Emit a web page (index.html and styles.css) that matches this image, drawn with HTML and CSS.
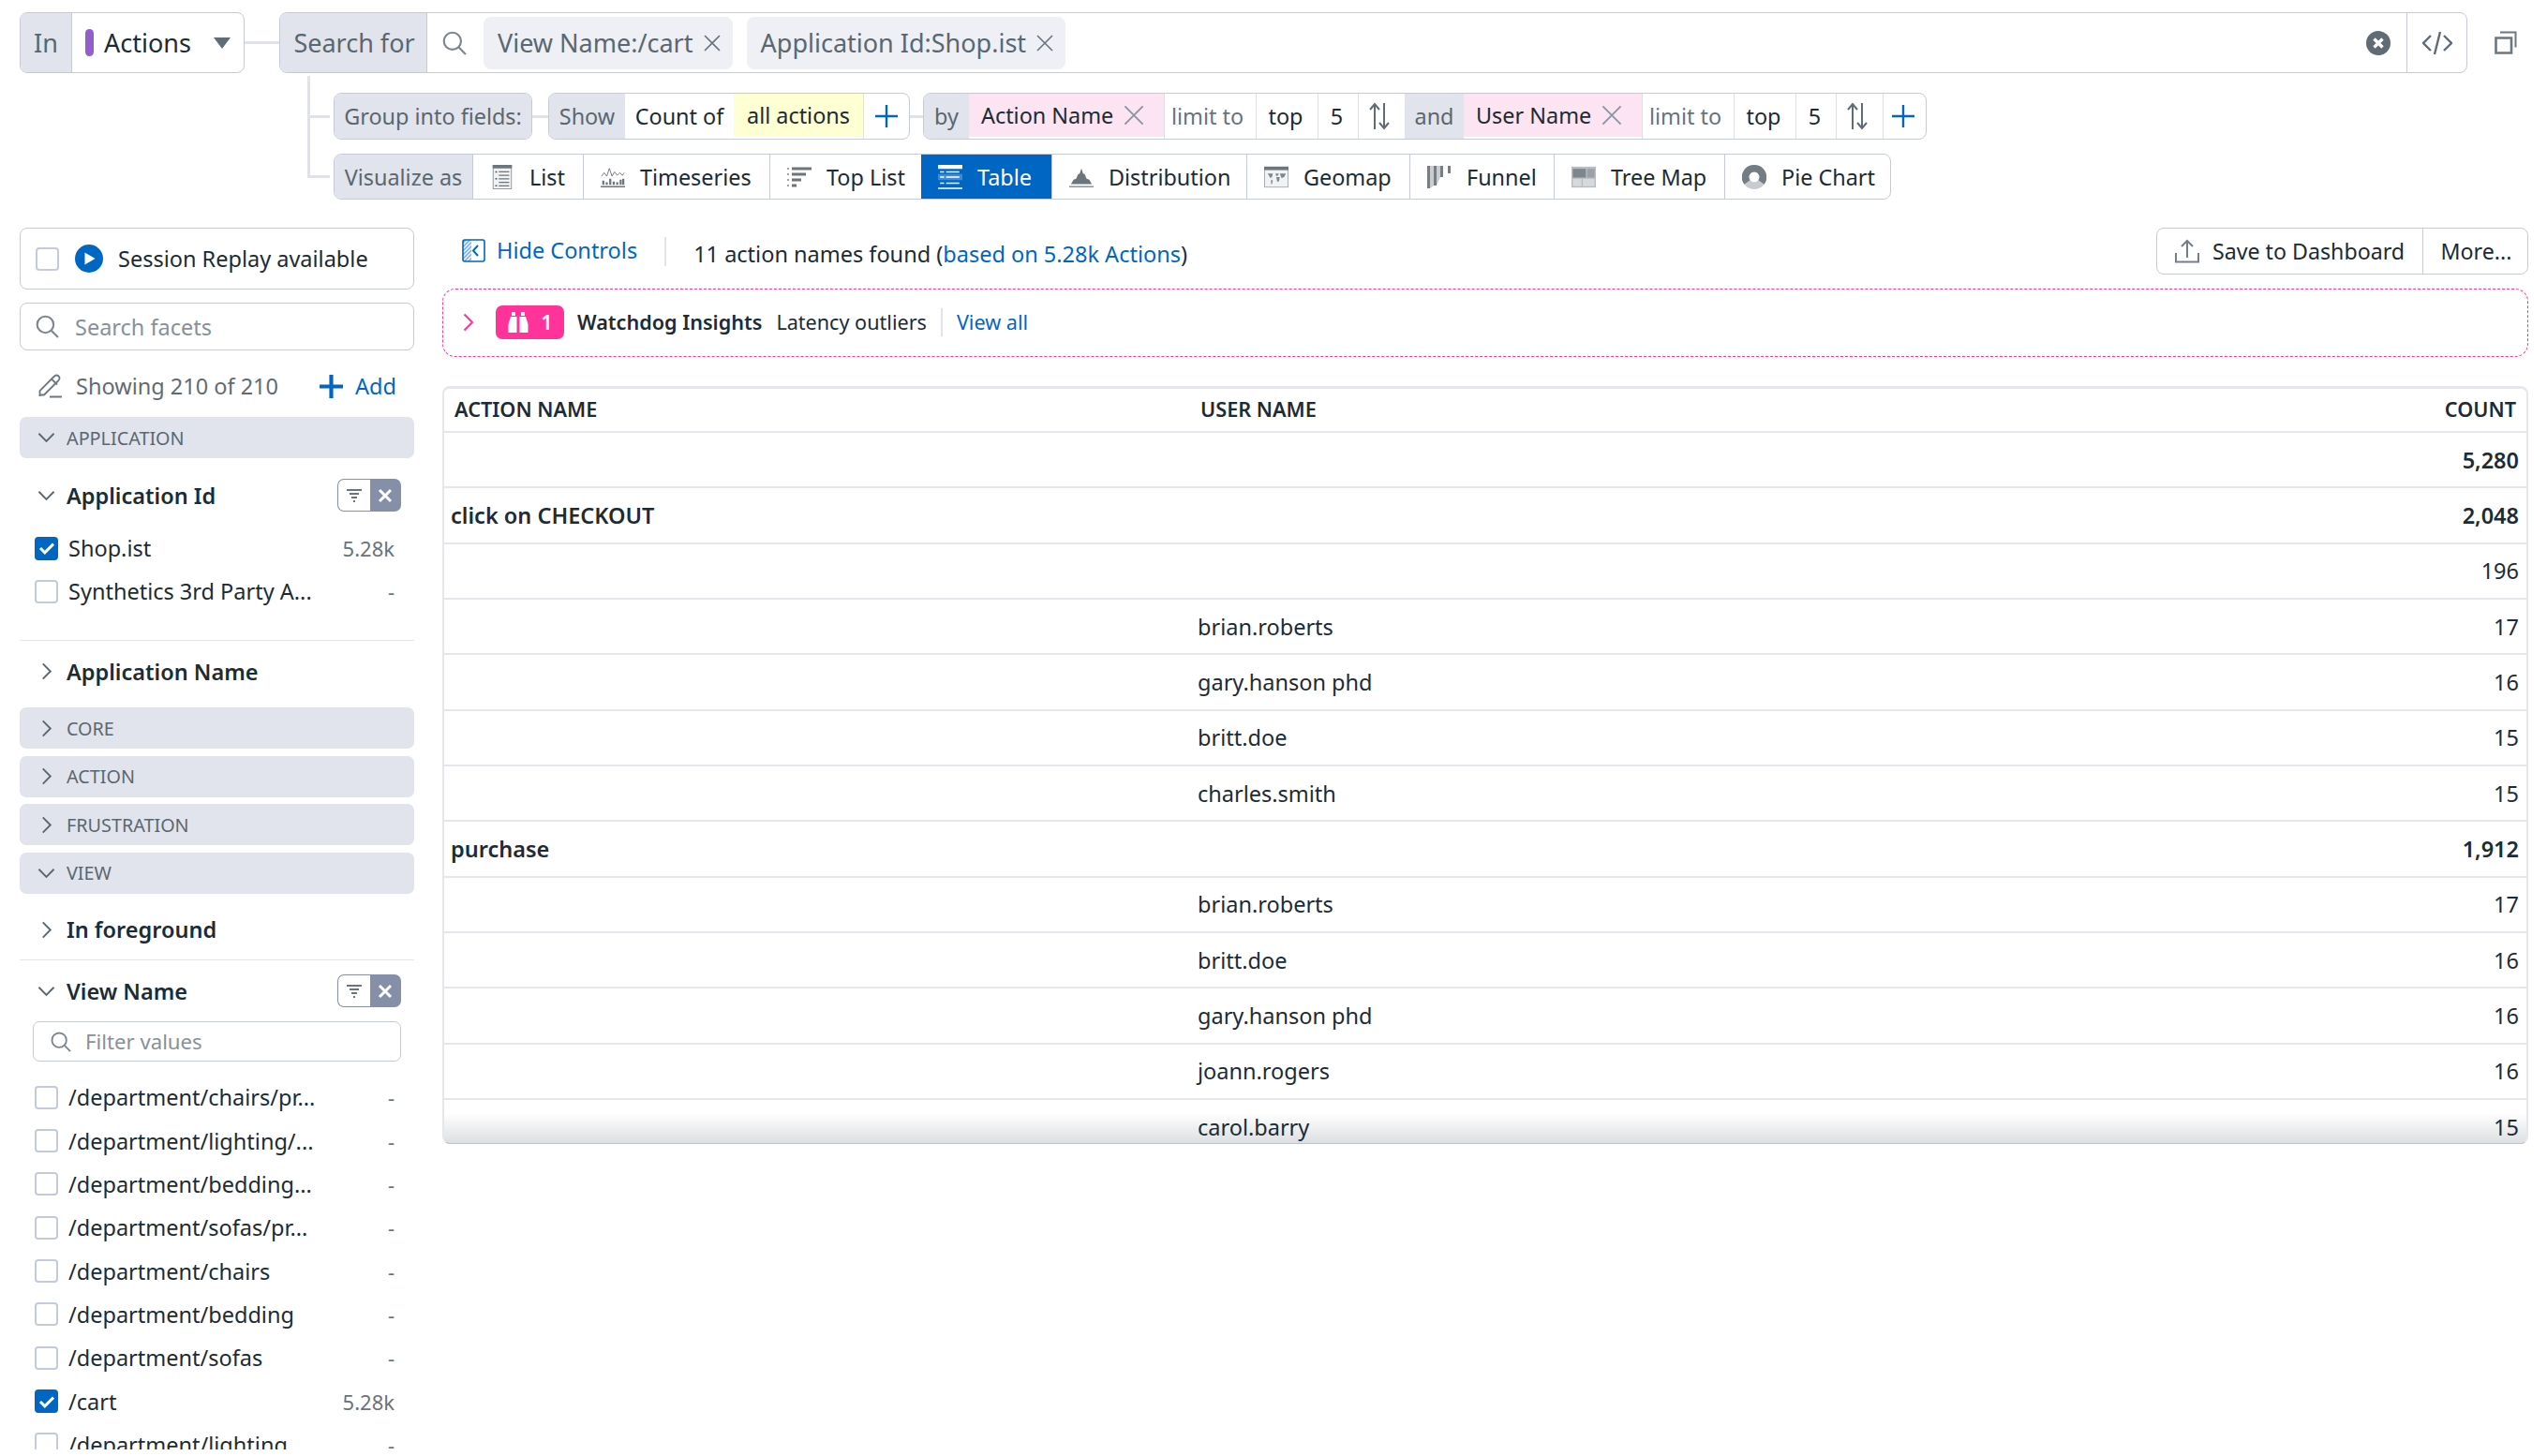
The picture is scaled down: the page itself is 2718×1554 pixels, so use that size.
FILE: index.html
```html
<!DOCTYPE html>
<html>
<head>
<meta charset="utf-8">
<title>Actions</title>
<link rel="stylesheet" href="styles.css">
</head>
<body>

<svg class="sprite" xmlns="http://www.w3.org/2000/svg">
  <symbol id="i-search" viewBox="0 0 24 24"><circle cx="10" cy="10" r="8.4" fill="none" stroke="currentColor" stroke-width="2"/><path d="M16 16l7 7" fill="none" stroke="currentColor" stroke-width="2"/></symbol>
  <symbol id="i-x" viewBox="0 0 20 20"><path d="M2 2l16 16M18 2L2 18" fill="none" stroke="currentColor" stroke-width="1.6"/></symbol>
  <symbol id="i-plus" viewBox="0 0 24 24"><path d="M12 0v24M0 12h24" fill="none" stroke="currentColor" stroke-width="2.4"/></symbol>
  <symbol id="i-plus-bold" viewBox="0 0 24 24"><path d="M12 0v24M0 12h24" fill="none" stroke="currentColor" stroke-width="4"/></symbol>
  <symbol id="i-sort" viewBox="0 0 24 30"><path d="M7 29V3M2 8l5-6 5 6M17 1v26M12 22l5 6 5-6" fill="none" stroke="currentColor" stroke-width="2"/></symbol>
  <symbol id="i-down" viewBox="0 0 20 12"><path d="M1.5 1.5L10 10l8.5-8.5" fill="none" stroke="currentColor" stroke-width="2"/></symbol>
  <symbol id="i-right" viewBox="0 0 12 20"><path d="M1.5 1.5L10 10l-8.5 8.5" fill="none" stroke="currentColor" stroke-width="2"/></symbol>
  <symbol id="i-funnel" viewBox="0 0 16 14"><path d="M0 1h16M3 5h10M5 9h6M7 13h2" fill="none" stroke="currentColor" stroke-width="1.6"/></symbol>
  <symbol id="i-close" viewBox="0 0 16 16"><path d="M2 2l12 12M14 2L2 14" fill="none" stroke="currentColor" stroke-width="3"/></symbol>
  <symbol id="i-check" viewBox="0 0 20 16"><path d="M2 8l5.500 5.500L18 3" fill="none" stroke="currentColor" stroke-width="3.4"/></symbol>
</svg>

<div class="page">

  <!-- query builder -->
  <div class="query-row">
    <div class="seg-group source">
      <div class="seg seg-label">In</div>
      <div class="seg source-pick">
        <span class="source-dot"></span>
        <span class="source-name">Actions</span>
        <span class="source-caret"></span>
      </div>
    </div>
    <span class="link link-wide"></span>
    <div class="seg-group search-bar">
      <div class="seg seg-label search-label">Search for</div>
      <svg class="icon search-icon"><use href="#i-search"/></svg>
      <span class="pill">View Name:/cart <svg class="icon pill-x"><use href="#i-x"/></svg></span>
      <span class="pill">Application Id:Shop.ist <svg class="icon pill-x"><use href="#i-x"/></svg></span>
      <svg class="clear-icon" viewBox="0 0 26 26"><circle cx="13" cy="13" r="13" fill="#5f6b75"/><path d="M8.5 8.5l9 9M17.5 8.5l-9 9" stroke="#fff" stroke-width="3.4"/></svg>
      <div class="code-btn">
        <svg class="code-icon" viewBox="0 0 32 26"><path d="M9 5l-8 8 8 8M23 5l8 8-8 8M19 1l-6 24" fill="none" stroke="#5f6b75" stroke-width="2.4"/></svg>
      </div>
    </div>
    <svg class="copy-icon" viewBox="0 0 24 25"><path d="M1.5 7.5h16.500v16H1.5z" fill="none" stroke="#6c7780" stroke-width="2.6"/><path d="M6 1.5h16.500v16" fill="none" stroke="#6c7780" stroke-width="2"/></svg>
  </div>

  <div class="tree">
    <div class="tree-row">
      <span class="stub"></span>
      <div class="seg-group group-label"><div class="seg seg-label">Group into fields:</div></div>
      <span class="link"></span>
      <div class="seg-group show-grid">
        <div class="seg seg-label">Show</div>
        <div class="seg">Count of</div>
        <div class="seg seg-yellow">all actions</div>
        <div class="seg seg-line"><svg class="icon plus-icon"><use href="#i-plus"/></svg></div>
      </div>
      <span class="link link-short"></span>
      <div class="seg-group by-grid">
        <div class="seg seg-label">by</div>
        <div class="seg seg-pink">Action Name <svg class="icon pink-x"><use href="#i-x"/></svg></div>
        <div class="seg seg-line seg-muted">limit to</div>
        <div class="seg seg-line">top</div>
        <div class="seg seg-line">5</div>
        <div class="seg seg-line seg-sort"><svg class="icon sort-icon"><use href="#i-sort"/></svg></div>
        <div class="seg seg-label">and</div>
        <div class="seg seg-pink">User Name <svg class="icon pink-x"><use href="#i-x"/></svg></div>
        <div class="seg seg-line seg-muted">limit to</div>
        <div class="seg seg-line">top</div>
        <div class="seg seg-line">5</div>
        <div class="seg seg-line seg-sort"><svg class="icon sort-icon"><use href="#i-sort"/></svg></div>
        <div class="seg seg-line"><svg class="icon plus-icon"><use href="#i-plus"/></svg></div>
      </div>
    </div>

    <div class="tree-row">
      <span class="stub"></span>
      <div class="seg-group viz-grid">
        <div class="seg seg-label">Visualize as</div>
        <div class="seg seg-viz">
          <svg class="viz-icon" viewBox="0 0 22 28"><rect x=".5" y=".5" width="21" height="27" fill="#f1f2f3" stroke="#8b9298"/><rect width="22" height="4" fill="#6c757c"/><path d="M7 8h12M7 12h12M7 16h12M7 20h12M7 24h12" stroke="#6c757c" stroke-width="1.4"/><path d="M3 8h2M3 16h2M3 24h2" stroke="#4d565d" stroke-width="1.6"/></svg>
          List
        </div>
        <div class="seg seg-viz">
          <svg class="viz-icon" viewBox="0 0 28 24"><path d="M1 11l3-4 3 4 3-9 3 9 3-5 3 4 3-3 3 3 2-3" fill="none" stroke="#6c757c" stroke-width="1"/><path d="M3 21v-5M7 21v-3M11 21v-7M15 21v-4M19 21v-3M23 21v-6M26 21v-7" stroke="#6c757c" stroke-width="2.4"/><path d="M0 23h28" stroke="#6c757c" stroke-width="1.6"/></svg>
          Timeseries
        </div>
        <div class="seg seg-viz">
          <svg class="viz-icon" viewBox="0 0 26 22"><path d="M5 2h21M5 8h15M5 14h10M5 20h5" stroke="#6c757c" stroke-width="3"/><path d="M0 2h2M0 8h2M0 14h2M0 20h2" stroke="#9ea5aa" stroke-width="2"/></svg>
          Top List
        </div>
        <div class="seg seg-viz seg-active">
          <svg class="viz-icon" viewBox="0 0 24 24"><path d="M0 2h24" stroke="#fff" stroke-width="4"/><rect y="9" width="24" height="6" fill="#3f8ad2"/><path d="M2 7h4M8 7h13M2 12h4M8 12h13M2 18h4M8 18h13M0 23h24" stroke="#fff" stroke-width="1.4"/></svg>
          Table
        </div>
        <div class="seg seg-viz">
          <svg class="viz-icon" viewBox="0 0 28 24"><path d="M2 20h24l-3-5-3-1-2-5-2-1-2-6-2 6-2 1-2 5-3 1z" fill="#6c757c"/><path d="M0 23h28" stroke="#8b9298" stroke-width="1.8"/></svg>
          Distribution
        </div>
        <div class="seg seg-viz">
          <svg class="viz-icon" viewBox="0 0 28 24"><rect x=".5" y=".5" width="27" height="23" fill="#f1f2f3" stroke="#a5abaf"/><rect width="28" height="4" fill="#6c757c"/><path d="M4 8h6l-1 4-2 1-1-2zM8 15l2 1-1 4h-1zM13 8h4l-1 2-2 1zM14 12h4l-1 5h-2zM18 8h7l-2 4-3 1z" fill="#7d868c"/></svg>
          Geomap
        </div>
        <div class="seg seg-viz">
          <svg class="viz-icon" viewBox="0 0 26 26"><path d="M0 1h3v24H0zM7 1h3v21H7zM14 1h3v12h-3zM22 1h3v8h-3z" fill="#757e85"/><path d="M3 25l4-3V1H3zM10 22l4-9V1h-4z" fill="#c9cdd0"/></svg>
          Funnel
        </div>
        <div class="seg seg-viz">
          <svg class="viz-icon" viewBox="0 0 28 24"><rect width="28" height="24" fill="#b9bdc1"/><rect x="1.5" y="2.5" width="15" height="10" fill="#7d868c"/><rect x="18" y="2.5" width="8.5" height="10" fill="#9ba2a7"/><rect x="1.5" y="14" width="10" height="8.5" fill="#d7dadc"/><rect x="13" y="14" width="13.5" height="8.5" fill="#d7dadc"/></svg>
          Tree Map
        </div>
        <div class="seg seg-viz">
          <svg class="viz-icon" viewBox="0 0 24 24"><circle cx="12" cy="12" r="8.5" fill="none" stroke="#c8ccd0" stroke-width="7"/><path d="M12 3.500A8.500 8.500 0 0 1 19 17M5 17A8.500 8.500 0 0 1 12 3.500" fill="none" stroke="#747d84" stroke-width="7"/></svg>
          Pie Chart
        </div>
      </div>
    </div>
  </div>

  <div class="content">

    <!-- facets -->
    <div class="sidebar">
      <div class="replay-box">
        <span class="check"></span>
        <svg class="play-icon" viewBox="0 0 30 30"><circle cx="15" cy="15" r="15" fill="#0066c4"/><path d="M10.5 8.5v13l11-6.500z" fill="#fff"/></svg>
        <span>Session Replay available</span>
      </div>
      <div class="facet-search">
        <svg class="icon facet-search-icon"><use href="#i-search"/></svg>
        <span>Search facets</span>
      </div>
      <div class="showing">
        <svg class="pencil-icon" viewBox="0 0 26 26"><path d="M1.5 24V18L16.5 3c2-2 3.500-2 5-.5s1.500 3 -.5 5L6 22.500H1.500M14 5.500l6 6M12 24.500h13" fill="none" stroke="#6c7780" stroke-width="1.8"/></svg>
        <span class="showing-text">Showing 210 of 210</span>
        <svg class="icon add-icon"><use href="#i-plus-bold"/></svg>
        <span class="add-text">Add</span>
      </div>

      <div class="section"><svg class="icon chev-down"><use href="#i-down"/></svg>APPLICATION</div>

      <div class="facet-head facet-first">
        <svg class="icon chev-down"><use href="#i-down"/></svg>
        <span class="facet-name">Application Id</span>
        <div class="toggle"><span class="toggle-left"><svg class="icon funnel-icon"><use href="#i-funnel"/></svg></span><span class="toggle-right"><svg class="icon close-icon"><use href="#i-close"/></svg></span></div>
      </div>
      <div class="value value-top"><span class="check checked"><svg class="icon check-icon"><use href="#i-check"/></svg></span><span class="value-name">Shop.ist</span><span class="value-count">5.28k</span></div>
      <div class="value"><span class="check"></span><span class="value-name">Synthetics 3rd Party A...</span><span class="value-count">-</span></div>
      <div class="rule rule-app"></div>

      <div class="facet-head facet-closed">
        <svg class="icon chev-right"><use href="#i-right"/></svg>
        <span class="facet-name">Application Name</span>
      </div>

      <div class="section section-first"><svg class="icon chev-right"><use href="#i-right"/></svg>CORE</div>
      <div class="section section-next"><svg class="icon chev-right"><use href="#i-right"/></svg>ACTION</div>
      <div class="section section-next"><svg class="icon chev-right"><use href="#i-right"/></svg>FRUSTRATION</div>
      <div class="section section-next"><svg class="icon chev-down"><use href="#i-down"/></svg>VIEW</div>

      <div class="facet-head facet-fg">
        <svg class="icon chev-right"><use href="#i-right"/></svg>
        <span class="facet-name">In foreground</span>
      </div>
      <div class="rule rule-fg"></div>
      <div class="facet-head facet-view">
        <svg class="icon chev-down"><use href="#i-down"/></svg>
        <span class="facet-name">View Name</span>
        <div class="toggle"><span class="toggle-left"><svg class="icon funnel-icon"><use href="#i-funnel"/></svg></span><span class="toggle-right"><svg class="icon close-icon"><use href="#i-close"/></svg></span></div>
      </div>
      <div class="filter-box">
        <svg class="icon filter-icon"><use href="#i-search"/></svg>
        <span>Filter values</span>
      </div>
      <div class="value"><span class="check"></span><span class="value-name">/department/chairs/pr...</span><span class="value-count">-</span></div>
      <div class="value"><span class="check"></span><span class="value-name">/department/lighting/...</span><span class="value-count">-</span></div>
      <div class="value"><span class="check"></span><span class="value-name">/department/bedding...</span><span class="value-count">-</span></div>
      <div class="value"><span class="check"></span><span class="value-name">/department/sofas/pr...</span><span class="value-count">-</span></div>
      <div class="value"><span class="check"></span><span class="value-name">/department/chairs</span><span class="value-count">-</span></div>
      <div class="value"><span class="check"></span><span class="value-name">/department/bedding</span><span class="value-count">-</span></div>
      <div class="value"><span class="check"></span><span class="value-name">/department/sofas</span><span class="value-count">-</span></div>
      <div class="value"><span class="check checked"><svg class="icon check-icon"><use href="#i-check"/></svg></span><span class="value-name">/cart</span><span class="value-count">5.28k</span></div>
      <div class="value"><span class="check"></span><span class="value-name">/department/lighting</span><span class="value-count">-</span></div>
    </div>

    <!-- results -->
    <div class="main">
      <div class="toolbar">
        <svg class="hide-icon" viewBox="0 0 25 25"><defs><pattern id="hatch" width="3" height="3" patternUnits="userSpaceOnUse" patternTransform="rotate(45)"><rect width="1.5" height="3" fill="#6ea3da"/></pattern></defs><rect x="1" y="1" width="9" height="23" fill="url(#hatch)"/><rect x="1" y="1" width="23" height="23" rx="2" fill="none" stroke="#0066c4" stroke-width="1.6"/><path d="M17 7l-5 5.500 5 5.500" fill="none" stroke="#0066c4" stroke-width="2"/></svg>
        <span class="hide-text">Hide Controls</span>
        <span class="tool-rule"></span>
        <span class="found">11 action names found (<span class="blue">based on 5.28k Actions</span>)</span>
        <div class="save-group">
          <div class="save-btn">
            <svg class="upload-icon" viewBox="0 0 26 26"><path d="M1 15v9.500h24V15" fill="none" stroke="#737e87" stroke-width="2"/><path d="M13 20V2M7 8l6-6 6 6" fill="none" stroke="#737e87" stroke-width="2"/></svg>
            Save to Dashboard
          </div>
          <div class="more-btn">More...</div>
        </div>
      </div>

      <div class="insights">
        <svg class="icon insight-chev"><use href="#i-right"/></svg>
        <span class="insight-badge">
          <svg class="binoc" viewBox="0 0 24 24"><path d="M5 1h4v4H5zM15 1h4v4h-4zM4 6h6.500v17H1.500V14zM13.500 6H20l2.500 8v9h-9z" fill="#fff"/></svg>
          1
        </span>
        <span class="insight-title">Watchdog Insights</span>
        <span class="insight-text">Latency outliers</span>
        <span class="insight-rule"></span>
        <span class="blue insight-link">View all</span>
      </div>

      <div class="table">
        <div class="row row-head"><div class="cell-name">ACTION NAME</div><div class="cell-user">USER NAME</div><div class="cell-num">COUNT</div></div>
        <div class="row row-bold"><div></div><div></div><div class="cell-num">5,280</div></div>
        <div class="row row-bold"><div>click on CHECKOUT</div><div></div><div class="cell-num">2,048</div></div>
        <div class="row"><div></div><div></div><div class="cell-num">196</div></div>
        <div class="row"><div></div><div>brian.roberts</div><div class="cell-num">17</div></div>
        <div class="row"><div></div><div>gary.hanson phd</div><div class="cell-num">16</div></div>
        <div class="row"><div></div><div>britt.doe</div><div class="cell-num">15</div></div>
        <div class="row"><div></div><div>charles.smith</div><div class="cell-num">15</div></div>
        <div class="row row-bold"><div>purchase</div><div></div><div class="cell-num">1,912</div></div>
        <div class="row"><div></div><div>brian.roberts</div><div class="cell-num">17</div></div>
        <div class="row"><div></div><div>britt.doe</div><div class="cell-num">16</div></div>
        <div class="row"><div></div><div>gary.hanson phd</div><div class="cell-num">16</div></div>
        <div class="row"><div></div><div>joann.rogers</div><div class="cell-num">16</div></div>
        <div class="row"><div></div><div>carol.barry</div><div class="cell-num">15</div></div>
      </div>
    </div>
  </div>
</div>

</body>
</html>
```

FILE: styles.css
```css
* {
  box-sizing: border-box;
}

html, body {
  height: 100%;
}

body {
  margin: 0;
  overflow: hidden;
  background: #fff;
  color: #1c2b34;
  font-family: "Noto Sans", "Open Sans", sans-serif;
  font-size: 23.5px;
}

.sprite {
  position: absolute;
  width: 0;
  height: 0;
}

.icon {
  display: block;
  flex: none;
}

.blue {
  color: #0066c4;
}

.page {
  padding: 13px 20px 0 21px;
}

/* query builder */
.query-row {
  display: flex;
  align-items: center;
  height: 65px;
  font-size: 27px;
}

.seg-group {
  display: flex;
  align-items: stretch;
  background: #fff;
  border: 1.5px solid #c5cada;
  border-radius: 8px;
  overflow: hidden;
}

.seg {
  display: flex;
  align-items: center;
  justify-content: center;
  gap: 10px;
  white-space: nowrap;
}

.seg-label {
  background: #e1e4ec;
  color: #5b6770;
}

.source {
  width: 240px;
  height: 65px;
}

.source .seg-label {
  width: 55px;
  border-right: 1px solid #c5cada;
}

.source-pick {
  flex: 1;
  justify-content: flex-start;
  gap: 0;
  padding-left: 14px;
}

.source-dot {
  width: 9px;
  height: 29px;
  margin-right: 11px;
  border-radius: 5px;
  background: #925dcd;
}

.source-name {
  flex: 1;
}

.source-caret {
  width: 0;
  height: 0;
  margin-right: 14px;
  border-left: 9px solid transparent;
  border-right: 9px solid transparent;
  border-top: 12px solid #5f6b75;
}

.link {
  flex: none;
  width: 17px;
  height: 3px;
  background: #dfe2e8;
}

.link-wide {
  width: 37px;
}

.link-short {
  width: 14px;
}

.search-bar {
  flex: none;
  width: 2335px;
  height: 65px;
  align-items: center;
}

.search-label {
  align-self: stretch;
  width: 157px;
  padding-left: 2px;
  border-right: 1px solid #c5cada;
}

.search-icon {
  width: 26px;
  height: 26px;
  margin: 0 18px 0 16px;
  color: #7c868e;
}

.pill {
  display: flex;
  align-items: center;
  gap: 10px;
  height: 56px;
  margin-right: 15px;
  padding: 0 12px 0 15px;
  border-radius: 8px;
  background: #eef0f5;
  color: #5b6770;
  white-space: nowrap;
}

.pill-x {
  width: 20px;
  height: 20px;
  color: #68737c;
}

.clear-icon {
  flex: none;
  width: 26px;
  height: 26px;
  margin-left: auto;
  margin-right: 17px;
}

.code-btn {
  display: flex;
  align-items: center;
  justify-content: center;
  align-self: stretch;
  width: 64px;
  border-left: 1px solid #c5cada;
}

.code-icon {
  width: 32px;
  height: 26px;
}

.copy-icon {
  flex: none;
  width: 24px;
  height: 25px;
  margin-left: 29px;
}

/* the vertical tree line is drawn as a background of the block */
.tree {
  display: flex;
  flex-direction: column;
  gap: 15px;
  margin: 3px 0 0 307px;
  padding-top: 18px;
  background: linear-gradient(#dfe2e8, #dfe2e8) left top / 3px 109px no-repeat;
}

.tree-row {
  display: flex;
  align-items: center;
  font-size: 23.4px;
}

.stub {
  flex: none;
  width: 24px;
  height: 3px;
  margin-right: 4px;
  background: #dfe2e8;
}

.group-label {
  width: 212px;
  height: 50px;
}

.group-label .seg {
  flex: 1;
}

.show-grid,
.by-grid,
.viz-grid {
  display: grid;
}

.show-grid {
  grid-template-columns: 81px 116px 138px 1fr;
  width: 386px;
  height: 50px;
}

.by-grid {
  grid-template-columns: 48px 208px 98px 66px 43px 50px 63px 190px 98px 66px 43px 50px 1fr;
  width: 1071px;
  height: 50px;
}

.by-grid .seg-line {
  padding-right: 3px;
}

.by-grid .seg-muted,
.by-grid .seg-sort {
  padding-right: 6px;
}

.viz-grid {
  grid-template-columns: 147px 118px 199px 162px 139px 208px 174px 154px 182px 1fr;
  width: 1662px;
  height: 49px;
}

.seg-yellow {
  margin-bottom: 2px;
  background: #feffd2;
}

.seg-pink {
  justify-content: flex-start;
  margin-bottom: 2px;
  padding-left: 13px;
  background: #fde4f3;
}

.seg-line {
  border-left: 1px solid #dde0e9;
}

.seg-muted {
  color: #68737c;
}

.plus-icon {
  width: 24px;
  height: 24px;
  color: #0066c4;
}

.pink-x {
  width: 24px;
  height: 24px;
  color: #8c96a3;
}

.sort-icon {
  width: 24px;
  height: 30px;
  color: #5f6b75;
}

.seg-viz {
  justify-content: flex-start;
  gap: 16px;
  padding-left: 18px;
  border-left: 1px solid #c5cada;
}

.seg-active {
  background: #0066c4;
  color: #fff;
  border-left: 0;
}

.viz-icon {
  flex: none;
  width: 26px;
  height: 26px;
}

/* two column area */
.content {
  display: grid;
  grid-template-columns: 421px 2226px;
  gap: 30px;
  margin-top: 30px;
}

.sidebar {
  height: 1304px;
  overflow: hidden;
}

.replay-box {
  display: flex;
  align-items: center;
  height: 66px;
  padding-left: 16px;
  border: 1.5px solid #c5cada;
  border-radius: 8px;
}

.check {
  display: flex;
  align-items: center;
  justify-content: center;
  flex: none;
  width: 25px;
  height: 25px;
  border: 2.5px solid #c3cadf;
  border-radius: 4px;
  background: #fff;
}

.check.checked {
  border-color: #0066c4;
  background: #0066c4;
}

.check-icon {
  width: 18px;
  height: 14px;
  color: #fff;
}

.play-icon {
  flex: none;
  width: 30px;
  height: 30px;
  margin: 0 16px 0 17px;
}

.facet-search {
  display: flex;
  align-items: center;
  height: 51px;
  margin-top: 14px;
  padding-left: 16px;
  border: 1.5px solid #c5cada;
  border-radius: 8px;
  color: #87919a;
}

.facet-search-icon {
  width: 25px;
  height: 25px;
  margin-right: 17px;
  color: #7c868e;
}

.showing {
  display: flex;
  align-items: center;
  height: 71px;
  padding: 5px 0 0 20px;
  color: #5f6b75;
}

.pencil-icon {
  flex: none;
  width: 26px;
  height: 26px;
  margin-right: 14px;
}

.showing-text {
  flex: 1;
}

.add-icon {
  width: 25px;
  height: 25px;
  margin-right: 13px;
  color: #0066c4;
}

.add-text {
  margin-right: 19px;
  color: #0066c4;
}

.section {
  display: flex;
  align-items: center;
  height: 44px;
  border-radius: 7px;
  background: #e1e4ec;
  color: #5b6770;
  font-size: 19.8px;
}

.section-first {
  margin-top: 19px;
}

.section-next {
  margin-top: 7.5px;
}

.chev-down {
  width: 19px;
  height: 12px;
  margin: 0 12px 0 19px;
  color: #5b6770;
}

.chev-right {
  width: 12px;
  height: 19px;
  margin: 0 15px 0 23px;
  color: #5b6770;
}

.facet-head {
  display: flex;
  align-items: center;
  height: 39px;
}

.facet-first {
  margin-top: 20px;
}

.facet-closed {
  margin-top: 13px;
}

.facet-fg {
  margin-top: 19px;
}

.facet-view {
  margin-top: 13px;
}

.facet-name {
  flex: 1;
  font-weight: 600;
}

.toggle {
  display: flex;
  width: 68px;
  height: 35px;
  margin-right: 14px;
}

.toggle-left,
.toggle-right {
  display: flex;
  align-items: center;
  justify-content: center;
  flex: 1;
}

.toggle-left {
  border: 1px solid #868fa8;
  border-right: 0;
  border-radius: 7px 0 0 7px;
}

.toggle-right {
  border-radius: 0 7px 7px 0;
  background: #868fa8;
}

.funnel-icon {
  width: 16px;
  height: 14px;
  color: #3c4750;
}

.close-icon {
  width: 16px;
  height: 16px;
  color: #fff;
}

.value {
  display: flex;
  align-items: center;
  height: 46.33px;
  padding: 0 21px 0 16px;
}

.value-top {
  margin-top: 14px;
}

.value-name {
  flex: 1;
  margin-left: 11px;
  white-space: nowrap;
}

.value-count {
  color: #68737c;
  font-size: 22px;
}

.rule {
  height: 1.5px;
  background: #e1e4ec;
}

.rule-app {
  margin-top: 28px;
}

.rule-fg {
  margin-top: 12px;
}

.filter-box {
  display: flex;
  align-items: center;
  height: 43px;
  margin: 13px 14px 15px;
  padding-left: 18px;
  border: 1.5px solid #c5cada;
  border-radius: 7px;
  color: #87919a;
  font-size: 22.2px;
}

.filter-icon {
  width: 22px;
  height: 22px;
  margin-right: 15px;
  color: #7c868e;
}

/* results */
.toolbar {
  display: flex;
  align-items: center;
  height: 50px;
  padding-left: 21px;
}

.hide-icon {
  flex: none;
  width: 25px;
  height: 25px;
  margin: -1px 12px 0 0;
}

.hide-text {
  margin-top: -2px;
  color: #0066c4;
}

.tool-rule {
  width: 2px;
  height: 31px;
  margin: 0 29px 0 29px;
  background: #e1e4ec;
}

.found {
  margin-top: 6px;
}

.save-group {
  display: flex;
  height: 50px;
  margin-left: auto;
  border: 1.5px solid #c5cada;
  border-radius: 8px;
  font-size: 23.2px;
}

.save-btn {
  display: flex;
  align-items: center;
  width: 284px;
  padding-left: 19px;
  gap: 14px;
  border-right: 1.5px solid #c5cada;
}

.upload-icon {
  flex: none;
  width: 26px;
  height: 26px;
}

.more-btn {
  display: flex;
  align-items: center;
  justify-content: center;
  width: 111px;
  padding-left: 2px;
}

.insights {
  display: flex;
  align-items: center;
  height: 73px;
  margin-top: 15px;
  padding: 0 0 2px 21px;
  border: 1.5px dashed #ff3399;
  border-radius: 14px;
  font-size: 21.6px;
}

.insight-chev {
  width: 12px;
  height: 20px;
  color: #ff3399;
}

.insight-badge {
  display: flex;
  align-items: center;
  justify-content: center;
  gap: 12px;
  width: 73px;
  height: 36px;
  margin: 0 14px 0 23px;
  border-radius: 7px;
  background: #ff3399;
  color: #fff;
  font-weight: 600;
}

.binoc {
  width: 24px;
  height: 24px;
}

.insight-title {
  font-weight: 600;
}

.insight-text {
  margin-left: 15px;
}

.insight-rule {
  width: 2px;
  height: 30px;
  margin: 0 15px;
  background: #e1e4ec;
}

/* the fade on the last, cut off row sits under the text */
.table {
  height: 809px;
  margin-top: 31px;
  overflow: hidden;
  border: 2px solid #e4e7ee;
  border-top-width: 3px;
  border-bottom: 1.5px solid #bfc3cd;
  border-radius: 8px;
  background: linear-gradient(rgba(215, 217, 221, 0), rgba(215, 217, 221, .85)) left bottom / 100% 32px no-repeat;
}

.row {
  display: grid;
  grid-template-columns: 797px 1fr 200px;
  align-items: center;
  height: 59.35px;
  padding: 0 8px 0 7px;
  border-bottom: 2px solid #e4e7ee;
}

.row-bold {
  font-weight: 600;
}

.row-head {
  grid-template-columns: 796px 1fr 200px;
  height: 47px;
  padding: 0 11px 2px;
  font-size: 21.7px;
  font-weight: 600;
}

.cell-num {
  text-align: right;
}
```
